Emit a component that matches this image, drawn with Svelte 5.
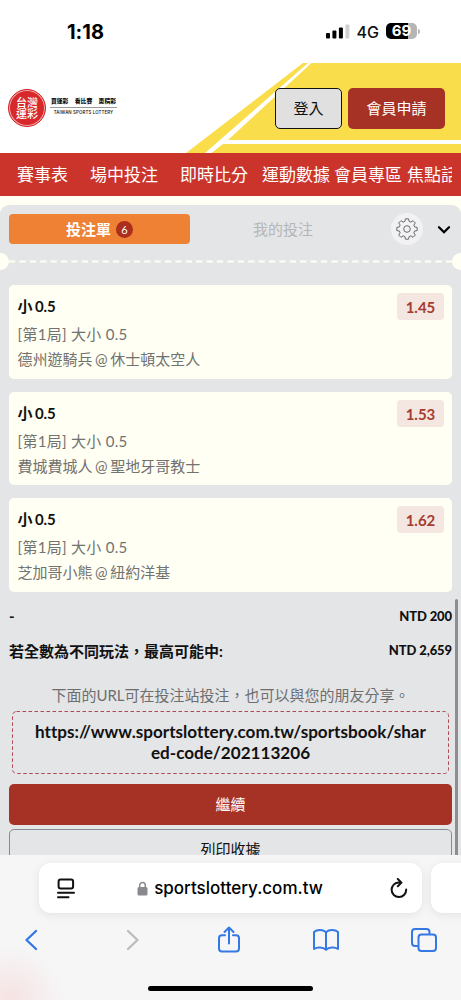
<script lang="ts">
	interface Bet {
		pick: string;
		market: string;
		match: string;
		odds: string;
	}

	const navItems = [
		{ label: '賽事表', width: 73 },
		{ label: '場中投注', width: 90 },
		{ label: '即時比分', width: 82 },
		{ label: '運動數據', width: 72 },
		{ label: '會員專區', width: 73 },
		{ label: '焦點話題', width: 68 }
	];

	const bets: Bet[] = [
		{ pick: '小 0.5', market: '[第1局] 大小 0.5', match: '德州遊騎兵 @ 休士頓太空人', odds: '1.45' },
		{ pick: '小 0.5', market: '[第1局] 大小 0.5', match: '費城費城人 @ 聖地牙哥教士', odds: '1.53' },
		{ pick: '小 0.5', market: '[第1局] 大小 0.5', match: '芝加哥小熊 @ 紐約洋基', odds: '1.62' }
	];

	// eight-tooth cog outline
	function cog(cx: number, cy: number, outer: number, inner: number): string {
		const points: string[] = [];
		const steps: [number, number][] = [
			[-15, inner],
			[-9, outer],
			[9, outer],
			[15, inner]
		];
		for (let i = 0; i < 8; i++) {
			for (const [offset, r] of steps) {
				const a = ((i * 45 + offset) * Math.PI) / 180;
				points.push(`${(cx + r * Math.cos(a)).toFixed(2)} ${(cy + r * Math.sin(a)).toFixed(2)}`);
			}
		}
		return `M${points.join('L')}Z`;
	}
</script>

<div class="phone">
	<div class="status">
		<span class="time">1:18</span>
		<div class="status-right">
			<svg width="24" height="16" viewBox="0 0 24 16">
				<rect x="0" y="10" width="4" height="5.5" rx="1" />
				<rect x="6.4" y="7.6" width="4" height="7.9" rx="1" />
				<rect x="12.9" y="4.5" width="4" height="11" rx="1" />
				<rect x="19.4" y="1.5" width="4" height="14" rx="1" fill="#d0d0d0" />
			</svg>
			<span class="network">4G</span>
			<div class="battery"><span>69</span></div>
			<i class="battery-tip"></i>
		</div>
	</div>

	<header>
		<svg class="court" width="461" height="90" viewBox="0 0 461 90">
			<path d="M303 0H461V90H186Z" fill="#f9dd4a" />
			<path d="M308 0L311.500 0L228 77H461V81H223L211.500 90H205Z" fill="#fff" />
		</svg>
		<div class="logo">
			<div class="seal"><span>台灣<br />運彩</span></div>
			<div class="slogan">
				<div class="slogan-zh"><span>買運彩</span><span>看比賽</span><span>更精彩</span></div>
				<div class="slogan-en">TAIWAN SPORTS LOTTERY</div>
			</div>
		</div>
		<button class="login">登入</button>
		<button class="join">會員申請</button>
	</header>

	<nav>
		<div class="nav-scroll">
			{#each navItems as item}
				<span style="width: {item.width}px">{item.label}</span>
			{/each}
		</div>
	</nav>

	<main>
		<section class="slip">
			<div class="tabs">
				<div class="tab active">投注單 <span class="count">6</span></div>
				<div class="tab">我的投注</div>
				<div class="gear">
					<svg width="24" height="24" viewBox="0 0 24 24">
						<path d={cog(12, 12, 10.3, 7.9)} />
						<circle cx="12" cy="12" r="3.3" />
					</svg>
				</div>
				<svg class="chevron" width="14" height="10" viewBox="0 0 14 10">
					<path d="M2 2.200L7 7.200L12 2.200" />
				</svg>
			</div>

			<div class="tear">
				<i class="notch"></i>
				<svg width="443" height="3" viewBox="0 0 443 3">
					<path d="M0 1.500H443" stroke="#fffff3" stroke-width="2" stroke-dasharray="6.200 4.200" />
				</svg>
				<i class="notch"></i>
			</div>

			<div class="bets">
				{#each bets as bet}
					<div class="bet">
						<div class="bet-text">
							<div class="pick">{bet.pick}</div>
							<div class="market">{bet.market}</div>
							<div class="match">{bet.match}</div>
						</div>
						<div class="odds">{bet.odds}</div>
					</div>
				{/each}
			</div>

			<div class="total first"><span>-</span><b>NTD 200</b></div>
			<div class="total"><span>若全數為不同玩法，最高可能中:</span><b>NTD 2,659</b></div>

			<p class="hint">下面的URL可在投注站投注，也可以與您的朋友分享。</p>
			<div class="share">
				<svg class="dashes" width="437" height="63">
					<rect x="0.5" y="0.5" width="436" height="62" rx="4" />
				</svg>
				https://www.sportslottery.com.tw/sportsbook/shar<br />ed-code/202113206
			</div>
			<button class="continue">繼續</button>
			<button class="print">列印收據</button>
			<i class="scrollbar"></i>
		</section>
	</main>

	<footer>
		<div class="address-row">
			<div class="address">
				<svg width="18" height="21" viewBox="0 0 18 21">
					<rect x="1.600" y="1.500" width="14.500" height="9" rx="2" />
					<path d="M1 14.800H17M1 19.300H11.500" />
				</svg>
				<div class="domain">
					<svg width="11" height="15" viewBox="0 0 11 15">
						<rect x="0.500" y="6" width="10" height="8.500" rx="1.500" fill="#8a8a8e" />
						<path d="M2.700 7V4.200a2.800 2.800 0 0 1 5.600 0V7" fill="none" stroke="#8a8a8e" stroke-width="1.500" />
					</svg>
					<span>sportslottery.com.tw</span>
				</div>
				<svg width="18" height="21" viewBox="0 0 18 21">
					<path d="M16.200 11.500A7.300 7.300 0 1 1 9 4.500H11.200M7.800 1L11.500 4.600L7.800 8.200" />
				</svg>
			</div>
			<div class="next-tab"></div>
		</div>
		<div class="toolbar">
			<svg width="26" height="28" viewBox="0 0 26 28"><path d="M18 5L8.500 14L18 23" /></svg>
			<svg class="disabled" width="26" height="28" viewBox="0 0 26 28"><path d="M8 5L17.500 14L8 23" /></svg>
			<svg class="thin" width="26" height="28" viewBox="0 0 26 28">
				<path d="M9 9.200H6a3 3 0 0 0-3 3V22.500a3 3 0 0 0 3 3H20a3 3 0 0 0 3-3V12.200a3 3 0 0 0-3-3H17M13 17.500V1.500M8.500 6L13 1.500L17.500 6" />
			</svg>
			<svg class="thin" width="28" height="28" viewBox="0 0 28 28">
				<path d="M14 6.500C11.500 3.200 5 3.200 2 6V23C5 20.800 11 20.800 14 23.800C17 20.800 23 20.800 26 23V6C23 3.200 16.500 3.200 14 6.500V23.500" />
			</svg>
			<svg class="thin" width="28" height="28" viewBox="0 0 28 28">
				<rect x="8.500" y="8.500" width="17.500" height="16.500" rx="3" />
				<path d="M8 20H5a3 3 0 0 1-3-3V6a3 3 0 0 1 3-3H16.500a3 3 0 0 1 3 3V8" />
			</svg>
		</div>
		<i class="home-bar"></i>
	</footer>
</div>

<style>
	:global(body) {
		margin: 0;
	}

	.phone {
		width: 461px;
		height: 1000px;
		overflow: hidden;
		display: flex;
		flex-direction: column;
		background: #fff;
		font-family: Lato, 'Noto Sans CJK TC', sans-serif;
		font-variant-ligatures: none;
		color: #111;
	}

	.phone * {
		box-sizing: border-box;
	}

	button {
		font-family: inherit;
		padding: 0 0 2px;
		border-radius: 5px;
	}

	svg {
		display: block;
		flex: none;
	}

	.status {
		height: 63px;
		flex: none;
		display: flex;
		justify-content: space-between;
		padding: 0 41px 0 67px;
		font-family: Inter, sans-serif;
	}

	.time {
		font-size: 20px;
		line-height: 24px;
		font-weight: 700;
		padding-top: 20px;
		color: #000;
	}

	.status-right {
		height: 24px;
		margin-top: 19px;
		display: flex;
		align-items: center;
	}

	.network {
		margin: 1px 7px 0 7px;
		font-size: 16px;
		font-weight: 500;
	}

	.battery {
		width: 31px;
		height: 16px;
		border-radius: 5px;
		background: linear-gradient(90deg, #000 70%, #b5b5b5 70%);
		color: #fff;
		text-align: center;
		font-size: 15px;
		line-height: 16px;
		font-weight: 700;
	}

	.battery-tip {
		width: 2px;
		height: 5px;
		margin-left: 1px;
		border-radius: 0 2px 2px 0;
		background: #b5b5b5;
	}

	header {
		height: 90px;
		flex: none;
		position: relative;
		display: flex;
		align-items: center;
		padding: 0 16px 0 8px;
	}

	.court {
		position: absolute;
		inset: 0;
	}

	.logo {
		display: flex;
		align-items: center;
		flex: 1;
	}

	.seal {
		width: 38px;
		height: 38px;
		border-radius: 50%;
		background: #d7282b;
		border: 1px solid #d7282b;
		box-shadow: inset 0 0 0 1px #f3b5b0;
		display: grid;
		place-items: center;
		color: #fff;
		font-family: 'Noto Sans CJK TC', sans-serif;
		font-size: 11px;
		line-height: 11.5px;
		font-weight: 500;
	}

	.slogan {
		width: 67px;
		margin-left: 4px;
		margin-top: -3px;
	}

	.slogan-zh {
		display: flex;
		justify-content: space-between;
		padding: 0 1px;
		font-size: 5.8px;
		line-height: 8px;
		padding-bottom: 2px;
		font-weight: 900;
		border-bottom: 1px solid #999;
	}

	.slogan-en {
		font-family: Inter, sans-serif;
		font-size: 4.4px;
		line-height: 9px;
		font-weight: 500;
		letter-spacing: 0.12px;
		text-align: center;
		white-space: nowrap;
	}

	.login,
	.join {
		position: relative;
		height: 41px;
		font-size: 15px;
	}

	.login {
		width: 67px;
		background: #e0e0e1;
		border: 1px solid #111;
		color: #111;
	}

	.join {
		width: 97px;
		margin-left: 6px;
		background: #a63225;
		border: 0;
		color: #fff;
	}

	nav {
		height: 43px;
		flex: none;
		background: #cb342b;
		padding: 0 9px 0 17px;
	}

	.nav-scroll {
		display: flex;
		overflow: hidden;
		color: #fff;
		font-size: 17px;
		line-height: 43px;
		white-space: nowrap;
	}

	.nav-scroll span {
		flex: none;
	}

	main {
		height: 659px;
		flex: none;
		padding-top: 9px;
		background: #fffff3;
	}

	.slip {
		position: relative;
		height: 650px;
		overflow: hidden;
		background: #e4e5e7;
		border-radius: 9px 9px 0 0;
		padding: 0 9px;
	}

	.tabs {
		height: 48px;
		display: flex;
		align-items: center;
	}

	.tab {
		width: 186px;
		height: 30px;
		display: flex;
		align-items: center;
		justify-content: center;
		padding-bottom: 1px;
		font-size: 15px;
		color: #b5b6b8;
	}

	.tab.active {
		width: 181px;
		background: #ee8133;
		border-radius: 4px;
		color: #fff;
		font-weight: 700;
	}

	.count {
		width: 17px;
		height: 17px;
		margin: 1px 0 0 5px;
		border-radius: 50%;
		background: #ad2e1c;
		font-size: 11px;
		line-height: 17px;
		font-weight: 400;
		text-align: center;
	}

	.gear {
		width: 32px;
		height: 32px;
		margin-left: 15px;
		border-radius: 50%;
		background: #f2f2f4;
		display: grid;
		place-items: center;
	}

	.gear svg {
		fill: none;
		stroke: #66686b;
		stroke-width: 1;
		stroke-linejoin: round;
	}

	.chevron {
		margin: 2px 0 0 14px;
		fill: none;
		stroke: #000;
		stroke-width: 2.3;
		stroke-linecap: round;
	}

	.tear {
		height: 17px;
		margin: 0 -17px;
		display: flex;
		align-items: center;
		justify-content: space-between;
	}

	.notch {
		width: 17px;
		height: 17px;
		flex: none;
		border-radius: 50%;
		background: #fffff3;
	}

	.bets {
		display: flex;
		flex-direction: column;
		gap: 13px;
		padding-top: 15px;
	}

	.bet {
		height: 93.7px;
		display: flex;
		justify-content: space-between;
		background: #fffff3;
		border-radius: 5px;
		padding: 8px 8px 8px 8.5px;
	}

	.bet-text {
		font-size: 15px;
		color: #727270;
		line-height: 25px;
		white-space: nowrap;
	}

	.pick {
		color: #111;
		font-weight: 700;
		line-height: 27px;
		margin-bottom: 2px;
		letter-spacing: -0.2px;
		word-spacing: -0.7px;
	}

	.market {
		letter-spacing: 0.3px;
	}

	.match {
		word-spacing: -1.3px;
	}

	.odds {
		width: 47px;
		height: 27px;
		border-radius: 4px;
		background: #f4e6e0;
		color: #a63c30;
		font-size: 15px;
		line-height: 28px;
		font-weight: 700;
		text-align: center;
	}

	.total {
		height: 34px;
		display: flex;
		align-items: center;
		justify-content: space-between;
		font-size: 15px;
		font-weight: 700;
	}

	.total.first {
		margin-top: 7px;
	}

	.total b {
		font-size: 13px;
		letter-spacing: -0.1px;
	}

	.hint {
		margin: 16px 0 0;
		text-align: center;
		font-size: 15px;
		line-height: 24px;
		color: #6d6e70;
		white-space: nowrap;
	}

	.share {
		position: relative;
		width: 437px;
		height: 63px;
		margin: 4px auto 0;
		padding-top: 10px;
		text-align: center;
		font-size: 17.1px;
		line-height: 21px;
		font-weight: 700;
		white-space: nowrap;
	}

	.dashes {
		position: absolute;
		inset: 0;
		fill: none;
		stroke: #b14852;
		stroke-width: 1;
		stroke-dasharray: 3.500 2.500;
	}

	.continue,
	.print {
		display: block;
		width: 100%;
		height: 41px;
		font-size: 15px;
	}

	.continue {
		margin-top: 10px;
		border: 0;
		background: #a63225;
		color: #fff;
	}

	.print {
		margin-top: 4px;
		background: transparent;
		border: 1px solid #888b8e;
		color: #111;
	}

	.scrollbar {
		position: absolute;
		right: 3px;
		top: 394px;
		width: 3px;
		height: 270px;
		border-radius: 2px;
		background: #8d8e90;
	}

	footer {
		height: 145px;
		flex: none;
		background: radial-gradient(circle at 10px 145px, #f6e2e2 0, rgba(246, 226, 226, 0) 55px), #f6f6f7;
	}

	.address-row {
		display: flex;
		gap: 9px;
		padding: 8px 0 0 39px;
	}

	.address {
		width: 383px;
		height: 50px;
		flex: none;
		display: flex;
		align-items: center;
		justify-content: space-between;
		padding: 0 14px 0 18px;
		border-radius: 12px;
		background: #fff;
		box-shadow: 0 2px 10px rgba(0, 0, 0, 0.08);
		fill: none;
		stroke: #111;
		stroke-width: 2;
		stroke-linecap: round;
		stroke-linejoin: round;
	}

	.domain {
		display: flex;
		align-items: center;
		gap: 6px;
		margin-right: 5px;
		font-family: Inter, sans-serif;
		font-size: 17px;
		font-weight: 500;
		stroke: none;
		color: #000;
	}

	.next-tab {
		width: 60px;
		height: 50px;
		flex: none;
		border-radius: 12px;
		background: #fff;
		box-shadow: 0 2px 10px rgba(0, 0, 0, 0.08);
	}

	.toolbar {
		display: flex;
		justify-content: space-between;
		padding: 13px 23px 0 18px;
		fill: none;
		stroke: #3478e5;
		stroke-width: 2.4;
		stroke-linecap: round;
		stroke-linejoin: round;
	}

	.toolbar svg:nth-child(2) {
		margin-left: 6px;
	}

	.toolbar .disabled {
		stroke: #bcbcbe;
	}

	.toolbar .thin {
		stroke-width: 2;
	}

	.home-bar {
		display: block;
		width: 165px;
		height: 5px;
		margin: 32px auto 0;
		border-radius: 3px;
		background: #000;
	}
</style>
